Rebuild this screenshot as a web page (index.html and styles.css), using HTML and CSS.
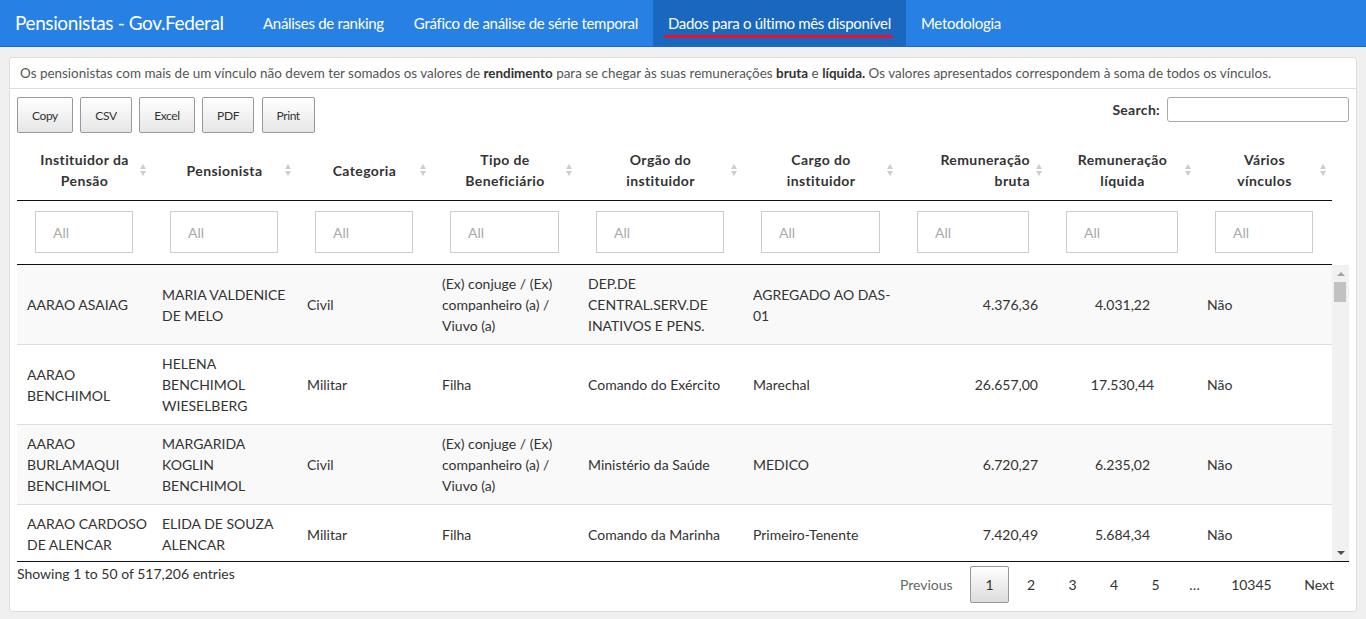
FILE: index.html
```html
<!DOCTYPE html>
<html lang="pt-BR">
<head>
    <meta charset="UTF-8">
    <meta name="viewport" content="width=device-width, initial-scale=1.0">
    <title>Pensionistas - Gov.Federal</title>
    <link rel="stylesheet" href="styles.css">
</head>
<body>
    <nav class="navbar">
        <div class="brand">Pensionistas - Gov.Federal</div>
        <ul class="nav">
            <li><a href="#">Análises de ranking</a></li>
            <li><a href="#">Gráfico de análise de série temporal</a></li>
            <li class="active"><a href="#">Dados para o último mês disponível</a></li>
            <li><a href="#">Metodologia</a></li>
        </ul>
    </nav>

    <main class="page">
        <div class="card">
            <div class="note">
                Os pensionistas com mais de um vínculo não devem ter somados os valores de <b>rendimento</b> para se chegar às suas remunerações <b>bruta</b> e <b>líquida.</b> Os valores apresentados correspondem à soma de todos os vínculos.
            </div>

            <div class="dt-wrapper">
                <div class="dt-top">
                    <div class="dt-buttons">
                        <button class="dt-button">Copy</button>
                        <button class="dt-button">CSV</button>
                        <button class="dt-button">Excel</button>
                        <button class="dt-button">PDF</button>
                        <button class="dt-button">Print</button>
                    </div>
                    <label class="dt-search">Search: <input type="search"></label>
                </div>

                <div class="dt-head">
                    <table>
                        <colgroup>
                            <col class="c1"><col class="c2"><col class="c3"><col class="c4"><col class="c5">
                            <col class="c6"><col class="c7"><col class="c8"><col class="c9">
                        </colgroup>
                        <thead>
                            <tr class="titles">
                                <th class="sorting">Instituidor da<br>Pensão</th>
                                <th class="sorting">Pensionista</th>
                                <th class="sorting">Categoria</th>
                                <th class="sorting">Tipo de<br>Beneficiário</th>
                                <th class="sorting">Orgão do<br>instituidor</th>
                                <th class="sorting">Cargo do<br>instituidor</th>
                                <th class="sorting dt-right">Remuneração<br>bruta</th>
                                <th class="sorting">Remuneração<br>líquida</th>
                                <th class="sorting">Vários<br>vínculos</th>
                            </tr>
                            <tr class="filters">
                                <td><input type="search" placeholder="All"></td>
                                <td><input type="search" placeholder="All"></td>
                                <td><input type="search" placeholder="All"></td>
                                <td><input type="search" placeholder="All"></td>
                                <td><input type="search" placeholder="All"></td>
                                <td><input type="search" placeholder="All"></td>
                                <td><input type="search" placeholder="All"></td>
                                <td><input type="search" placeholder="All"></td>
                                <td><input type="search" placeholder="All"></td>
                            </tr>
                        </thead>
                    </table>
                </div>

                <div class="dt-scroll">
                    <div class="dt-body">
                        <table>
                            <colgroup>
                                <col class="c1"><col class="c2"><col class="c3"><col class="c4"><col class="c5">
                                <col class="c6"><col class="c7"><col class="c8"><col class="c9">
                            </colgroup>
                            <tbody>
                                <tr>
                                    <td>AARAO ASAIAG</td>
                                    <td>MARIA VALDENICE<br>DE MELO</td>
                                    <td>Civil</td>
                                    <td>(Ex) conjuge / (Ex)<br>companheiro (a) /<br>Viuvo (a)</td>
                                    <td>DEP.DE<br>CENTRAL.SERV.DE<br>INATIVOS E PENS.</td>
                                    <td>AGREGADO AO DAS-<br>01</td>
                                    <td class="dt-right">4.376,36</td>
                                    <td class="dt-center">4.031,22</td>
                                    <td>Não</td>
                                </tr>
                                <tr>
                                    <td>AARAO<br>BENCHIMOL</td>
                                    <td>HELENA<br>BENCHIMOL<br>WIESELBERG</td>
                                    <td>Militar</td>
                                    <td>Filha</td>
                                    <td>Comando do Exército</td>
                                    <td>Marechal</td>
                                    <td class="dt-right">26.657,00</td>
                                    <td class="dt-center">17.530,44</td>
                                    <td>Não</td>
                                </tr>
                                <tr>
                                    <td>AARAO<br>BURLAMAQUI<br>BENCHIMOL</td>
                                    <td>MARGARIDA<br>KOGLIN<br>BENCHIMOL</td>
                                    <td>Civil</td>
                                    <td>(Ex) conjuge / (Ex)<br>companheiro (a) /<br>Viuvo (a)</td>
                                    <td>Ministério da Saúde</td>
                                    <td>MEDICO</td>
                                    <td class="dt-right">6.720,27</td>
                                    <td class="dt-center">6.235,02</td>
                                    <td>Não</td>
                                </tr>
                                <tr>
                                    <td>AARAO CARDOSO<br>DE ALENCAR</td>
                                    <td>ELIDA DE SOUZA<br>ALENCAR</td>
                                    <td>Militar</td>
                                    <td>Filha</td>
                                    <td>Comando da Marinha</td>
                                    <td>Primeiro-Tenente</td>
                                    <td class="dt-right">7.420,49</td>
                                    <td class="dt-center">5.684,34</td>
                                    <td>Não</td>
                                </tr>
                            </tbody>
                        </table>
                    </div>
                    <div class="vscroll">
                        <div class="arrow up"></div>
                        <div class="thumb"></div>
                        <div class="track"></div>
                        <div class="arrow down"></div>
                    </div>
                </div>

                <div class="dt-foot">
                    <div class="dt-info">Showing 1 to 50 of 517,206 entries</div>
                    <div class="paginate">
                        <a class="disabled">Previous</a>
                        <a class="current">1</a>
                        <a>2</a>
                        <a>3</a>
                        <a>4</a>
                        <a>5</a>
                        <span class="ellipsis">…</span>
                        <a>10345</a>
                        <a>Next</a>
                    </div>
                </div>
            </div>
        </div>
    </main>
</body>
</html>
```

FILE: styles.css
```css
* {
    box-sizing: border-box;
}
body {
    margin: 0;
    background: #f0f0f0;
    font-family: Lato, 'Liberation Sans', sans-serif;
    font-size: 14px;
    color: #333;
}

/* barra de navegação */
.navbar {
    display: flex;
    height: 47px;
    background: #2780e3;
    border-bottom: 1px solid #1a6ac2;
}
.brand {
    width: 248px;
    padding-left: 15px;
    font-size: 19px;
    letter-spacing: -0.4px;
    line-height: 46px;
    color: #fff;
}
.nav {
    display: flex;
    list-style: none;
    margin: 0;
    padding: 0;
}
.nav a {
    display: block;
    position: relative;
    padding: 0 15px;
    line-height: 46px;
    font-size: 15px;
    letter-spacing: -0.3px;
    color: #fff;
    text-decoration: none;
}
.nav .active a {
    background: #1967be;
}
.nav .active a::after {
    content: "";
    position: absolute;
    left: 11px;
    right: 13px;
    top: 35px;
    height: 3px;
    border-radius: 2px;
    background: #e8112d;
}

/* cartão */
.page {
    padding: 10px 9px;
}
.card {
    background: #fff;
    border: 1px solid #ddd;
    border-radius: 3px;
}
.note {
    height: 31px;
    line-height: 30px;
    padding: 0 10px;
    border-bottom: 1px solid #ddd;
    font-size: 13.45px;
    color: #555;
    white-space: nowrap;
}
.note b {
    color: #333;
}
.dt-wrapper {
    padding: 8px 7px;
}

/* botões e busca */
.dt-top {
    display: flex;
    justify-content: space-between;
    align-items: flex-start;
    margin-bottom: 6px;
}
.dt-buttons {
    display: flex;
    gap: 7.5px;
}
.dt-button {
    height: 36px;
    padding: 0 14px;
    border: 1px solid #999;
    border-radius: 2px;
    background: linear-gradient(#fff, #e6e6e6);
    font-family: Lato, 'Liberation Sans', sans-serif;
    font-size: 12px;
    letter-spacing: -0.4px;
    color: #333;
}
.dt-search {
    display: flex;
    align-items: center;
    gap: 7px;
    height: 25px;
    font-weight: bold;
    letter-spacing: 0.3px;
}
.dt-search input {
    width: 182px;
    height: 25px;
    border: 1px solid #aaa;
    border-radius: 3px;
}

/* tabela */
table {
    width: 100%;
    border-collapse: collapse;
    table-layout: fixed;
}
.c1 { width: 135px; }
.c2 { width: 145px; }
.c3 { width: 135px; }
.c4 { width: 146px; }
.c5 { width: 165px; }
.c6 { width: 156px; }
.c7 { width: 149px; }
.c8 { width: 149px; }
.c9 { width: 135px; }

.dt-head {
    padding-right: 17px;
}
.titles th {
    position: relative;
    padding: 10px 18px 9px;
    line-height: 21px;
    letter-spacing: 0.4px;
    text-align: center;
    border-bottom: 1px solid #111;
}
.titles th.dt-right {
    text-align: right;
}
.sorting::before,
.sorting::after {
    content: "";
    position: absolute;
    right: 6px;
    border-left: 3.5px solid transparent;
    border-right: 3.5px solid transparent;
}
.sorting::before {
    top: calc(50% - 6px);
    border-bottom: 5px solid #cdcdcd;
}
.sorting::after {
    top: calc(50% + 1px);
    border-top: 5px solid #cdcdcd;
}
.filters td {
    padding: 10px 19px 11px 18px;
    border-bottom: 1px solid #111;
}
.filters input {
    width: 100%;
    height: 42px;
    padding: 0 17px;
    border: 1px solid #ccc;
    font-family: Lato, 'Liberation Sans', sans-serif;
    font-size: 14px;
}
.filters input::placeholder {
    color: #aaa;
}

.dt-scroll {
    display: flex;
    height: 297px;
    border-bottom: 1px solid #111;
}
.dt-body {
    flex: 1;
    overflow: hidden;
}
.dt-body td {
    padding: 8px 10px;
    line-height: 21px;
    vertical-align: middle;
    white-space: nowrap;
    border-top: 1px solid #ddd;
}
.dt-body tr:first-child td {
    border-top: none;
}
.dt-body tr:nth-child(odd) {
    background: #f9f9f9;
}
.dt-right {
    text-align: right;
}
.dt-center {
    text-align: center;
}

/* barra de rolagem */
.vscroll {
    width: 17px;
    display: flex;
    flex-direction: column;
    background: #f1f1f1;
}
.arrow {
    height: 17px;
    display: flex;
    align-items: center;
    justify-content: center;
}
.arrow::before {
    content: "";
    border-left: 4px solid transparent;
    border-right: 4px solid transparent;
}
.arrow.up::before {
    border-bottom: 4px solid #a3a3a3;
}
.arrow.down::before {
    border-top: 4px solid #505050;
}
.thumb {
    height: 20px;
    margin: 0 3px 0 2px;
    background: #c1c1c1;
}
.track {
    flex: 1;
}

/* rodapé */
.dt-foot {
    display: flex;
    justify-content: space-between;
    align-items: flex-start;
}
.dt-info {
    padding-top: 1px;
    line-height: 21px;
}
.paginate {
    display: flex;
    padding-top: 4px;
}
.paginate a {
    min-width: 39px;
    padding: 7px 14px;
    margin-left: 2.5px;
    line-height: 21px;
    text-align: center;
    border: 1px solid transparent;
    border-radius: 2px;
    color: #333;
}
.paginate .current {
    border-color: #979797;
    background: linear-gradient(#fff, #dcdcdc);
}
.paginate .disabled {
    color: #666;
}
.ellipsis {
    padding: 0 14px;
    line-height: 37px;
}
```
